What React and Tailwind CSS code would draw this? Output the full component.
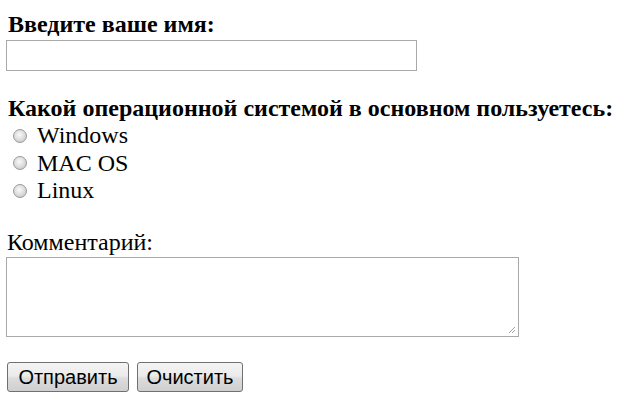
import React from 'react';

function Radio({ label }) {
  return (
    <label className="flex items-center h-[27.5px] leading-[27.5px]">
      <span className="ml-[7px] mr-[10px] w-[14px] h-[14px] rounded-full border border-[#9a9a9a] bg-[radial-gradient(circle_at_45%_40%,#fafafa_0%,#e0e0e0_45%,#bdbdbd_100%)]" />
      <span>{label}</span>
    </label>
  );
}

const buttonClass =
  'h-[30px] rounded-[3px] border border-[#707070] bg-[linear-gradient(#f4f4f4,#ebebeb_45%,#dcdcdc_55%,#cfcfcf)] leading-none';

export default function App() {
  return (
    <div className="bg-white w-[634px] h-[406px] text-black font-['Liberation_Serif',serif] text-[24px]">
      <form className="flex flex-col px-[6px] pt-[12px]">
        <div className="font-bold leading-[24px] pl-[2px]">Введите ваше имя:</div>
        <input
          type="text"
          className="mt-[4px] w-[411px] h-[31px] border border-[#a9a9a9] bg-white outline-none"
        />

        <div className="mt-[25px] font-bold leading-[24px] pl-[2px]">
          Какой операционной системой в основном пользуетесь:
        </div>
        <div className="flex flex-col mt-[2px]">
          <Radio label="Windows" />
          <Radio label="MAC OS" />
          <Radio label="Linux" />
        </div>

        <div className="mt-[25.5px] leading-[24px] pl-[1px]">Комментарий:</div>
        <div className="relative mt-[3px] w-[513px] h-[80px]">
          <textarea className="block w-full h-full border border-[#a9a9a9] bg-white resize-none outline-none" />
          <svg className="absolute right-[3px] bottom-[3px]" width="8" height="8" viewBox="0 0 8 8">
            <path d="M7 1 L1 7 M7 4 L4 7" stroke="#a0a0a0" strokeWidth="1" />
          </svg>
        </div>

        <div className="flex gap-[8px] mt-[25px] pl-[1px] font-['Liberation_Sans',Arial,sans-serif] text-[20px]">
          <button type="button" className={`w-[122px] ${buttonClass}`}>
            Отправить
          </button>
          <button type="button" className={`w-[106px] ${buttonClass}`}>
            Очистить
          </button>
        </div>
      </form>
    </div>
  );
}
